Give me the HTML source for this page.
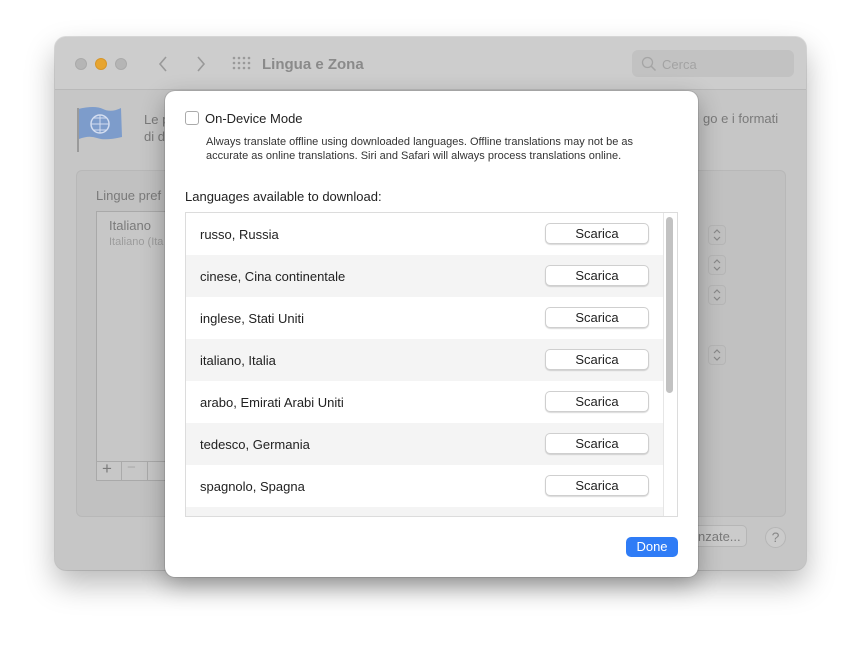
<!DOCTYPE html>
<html><head><meta charset="utf-8"><style>
*{box-sizing:border-box;margin:0;padding:0}
body{width:862px;height:651px;background:#fff;font-family:"Liberation Sans",sans-serif;position:relative;overflow:hidden}
.win{position:absolute;left:55px;top:37px;width:751px;height:533px;border-radius:11px;background:#c6c6c6;box-shadow:0 14px 30px rgba(0,0,0,.28),0 0 0 1px rgba(0,0,0,.12);overflow:hidden}
.tb{position:absolute;left:0;top:0;right:0;height:53px;background:#cdcdcd;border-bottom:1px solid #b9b9b9}
.dot{position:absolute;top:21px;width:12px;height:12px;border-radius:50%;background:#b5b5b5;border:1px solid #aaa}
.title{position:absolute;left:207px;top:19px;font-size:15px;font-weight:bold;color:#8a8a8a}
.search{position:absolute;left:577px;top:13px;width:162px;height:27px;border-radius:6px;background:#c2c2c2;color:#a3a3a3;font-size:13px;padding:7px 0 0 30px}
.sheet{position:absolute;left:165px;top:91px;width:533px;height:486px;background:#fff;border-radius:10px;box-shadow:0 8px 24px rgba(0,0,0,.3),0 0 0 1px rgba(0,0,0,.1)}
.t{position:absolute;white-space:nowrap}
.list{position:absolute;left:20px;top:121px;width:493px;height:305px;border:1px solid #dcdcdc;overflow:hidden}
.row{position:absolute;left:0;width:477px;height:42px;font-size:13px;color:#222}
.row span{position:absolute;left:14px;top:14px}
.btn{position:absolute;left:359px;top:10px;width:104px;height:21px;border-radius:5px;background:#fff;border:1px solid #cfcfcf;box-shadow:0 1px 1px rgba(0,0,0,.15);font-size:13px;text-align:center;line-height:19px;color:#222}
.g{background:#f4f4f4}
.step{position:absolute;width:18px;height:20px;border-radius:4px;background:#c0c0c0;border:1px solid #b5b5b5}
</style></head><body>
<div class="win">
 <div class="tb">
  <div class="dot" style="left:20px"></div>
  <div class="dot" style="left:40px;background:#e7a530;border-color:#d6962a"></div>
  <div class="dot" style="left:60px"></div>
  <svg style="position:absolute;left:103px;top:19px" width="60" height="16"><path d="M8 1 L2 8 L8 15" stroke="#999" stroke-width="1.6" fill="none"/><path d="M40 1 L46 8 L40 15" stroke="#999" stroke-width="1.6" fill="none"/></svg>
  <svg style="position:absolute;left:177px;top:19px" width="20" height="16" fill="#999"><circle cx="2" cy="2" r="1.3"/><circle cx="7" cy="2" r="1.3"/><circle cx="12" cy="2" r="1.3"/><circle cx="17" cy="2" r="1.3"/><circle cx="2" cy="7" r="1.3"/><circle cx="7" cy="7" r="1.3"/><circle cx="12" cy="7" r="1.3"/><circle cx="17" cy="7" r="1.3"/><circle cx="2" cy="12" r="1.3"/><circle cx="7" cy="12" r="1.3"/><circle cx="12" cy="12" r="1.3"/><circle cx="17" cy="12" r="1.3"/></svg>
  <div class="title">Lingua e Zona</div>
  <div class="search"><svg style="position:absolute;left:9px;top:6px" width="16" height="16"><circle cx="6.5" cy="6.5" r="5" stroke="#a5a5a5" stroke-width="1.3" fill="none"/><path d="M10 10 L14.5 14.5" stroke="#a5a5a5" stroke-width="1.5"/></svg>Cerca</div>
 </div>
 <svg style="position:absolute;left:20px;top:68px" width="50" height="48"><path d="M3 4 Q20 0 28 4 T46 3 L47 32 Q30 36 22 33 T4 34Z" fill="#7d9ccb"/><circle cx="25" cy="19" r="9" fill="none" stroke="#d3ddf0" stroke-width="1.5"/><path d="M16 19h18M25 10v18M19 13h12M19 25h12" stroke="#d3ddf0" stroke-width="1"/><rect x="2" y="3" width="2" height="44" fill="#9a9a9a"/></svg>
 <div class="t" style="left:89px;top:74px;font-size:13px;color:#7a7a7a;line-height:17px">Le p<br>di d</div>
 <div class="t" style="left:648px;top:74px;font-size:13px;color:#7a7a7a">go e i formati</div>
 <div style="position:absolute;left:21px;top:133px;width:710px;height:347px;border-radius:6px;background:#c1c1c1;border:1px solid #b8b8b8"></div>
 <div class="t" style="left:41px;top:151px;font-size:13px;color:#7a7a7a">Lingue pref</div>
 <div style="position:absolute;left:41px;top:174px;width:80px;height:270px;background:#c7c7c7;border:1px solid #a9a9a9"></div>
 <div class="t" style="left:54px;top:181px;font-size:13px;color:#7a7a7a">Italiano</div>
 <div class="t" style="left:54px;top:199px;font-size:11px;color:#9c9c9c">Italiano (Ita</div>
 <div style="position:absolute;left:41px;top:424px;width:80px;height:20px;border-top:1px solid #aaa"></div>
 <div class="t" style="left:47px;top:422px;font-size:17px;color:#7a7a7a">+</div>
 <div style="position:absolute;left:66px;top:424px;width:1px;height:20px;background:#aaa"></div>
 <div class="t" style="left:72px;top:422px;font-size:15px;color:#aaa">−</div>
 <div style="position:absolute;left:92px;top:424px;width:1px;height:20px;background:#aaa"></div>
 <div class="step" style="left:653px;top:188px"><svg width="16" height="18"><path d="M5 7l3-3 3 3M5 11l3 3 3-3" stroke="#888" stroke-width="1.2" fill="none"/></svg></div>
 <div class="step" style="left:653px;top:218px"><svg width="16" height="18"><path d="M5 7l3-3 3 3M5 11l3 3 3-3" stroke="#888" stroke-width="1.2" fill="none"/></svg></div>
 <div class="step" style="left:653px;top:248px"><svg width="16" height="18"><path d="M5 7l3-3 3 3M5 11l3 3 3-3" stroke="#888" stroke-width="1.2" fill="none"/></svg></div>
 <div class="step" style="left:653px;top:308px"><svg width="16" height="18"><path d="M5 7l3-3 3 3M5 11l3 3 3-3" stroke="#888" stroke-width="1.2" fill="none"/></svg></div>
 <div style="position:absolute;left:620px;top:488px;width:72px;height:22px;border-radius:5px;background:#cbcbcb;border:1px solid #b6b6b6;font-size:13px;color:#7a7a7a;padding:3px 0 0 22px">nzate...</div>
 <div style="position:absolute;left:710px;top:490px;width:21px;height:21px;border-radius:50%;background:#cbcbcb;border:1px solid #b6b6b6;font-size:14px;color:#888;text-align:center;line-height:19px">?</div>
</div>
<div class="sheet">
 <div style="position:absolute;left:20px;top:20px;width:14px;height:14px;border:1px solid #aaa;border-radius:3px;background:#fff"></div>
 <div class="t" style="left:40px;top:20px;font-size:13px;color:#222">On-Device Mode</div>
 <div class="t" style="left:41px;top:44px;font-size:11px;color:#333;line-height:14px">Always translate offline using downloaded languages. Offline translations may not be as<br>accurate as online translations. Siri and Safari will always process translations online.</div>
 <div class="t" style="left:20px;top:98px;font-size:13px;color:#222">Languages available to download:</div>
 <div class="list">
  <div class="row" style="top:0"><span>russo, Russia</span><div class="btn">Scarica</div></div>
  <div class="row g" style="top:42px"><span>cinese, Cina continentale</span><div class="btn">Scarica</div></div>
  <div class="row" style="top:84px"><span>inglese, Stati Uniti</span><div class="btn">Scarica</div></div>
  <div class="row g" style="top:126px"><span>italiano, Italia</span><div class="btn">Scarica</div></div>
  <div class="row" style="top:168px"><span>arabo, Emirati Arabi Uniti</span><div class="btn">Scarica</div></div>
  <div class="row g" style="top:210px"><span>tedesco, Germania</span><div class="btn">Scarica</div></div>
  <div class="row" style="top:252px"><span>spagnolo, Spagna</span><div class="btn">Scarica</div></div>
  <div class="row g" style="top:294px"></div>
  <div style="position:absolute;left:477px;top:0;width:1px;height:305px;background:#e6e6e6"></div>
  <div style="position:absolute;left:480px;top:4px;width:7px;height:176px;border-radius:4px;background:#c2c2c2"></div>
 </div>
 <div style="position:absolute;left:461px;top:446px;width:52px;height:20px;border-radius:5px;background:#2f7cf6;color:#fff;font-size:13px;text-align:center;line-height:20px">Done</div>
</div>
</body></html>
